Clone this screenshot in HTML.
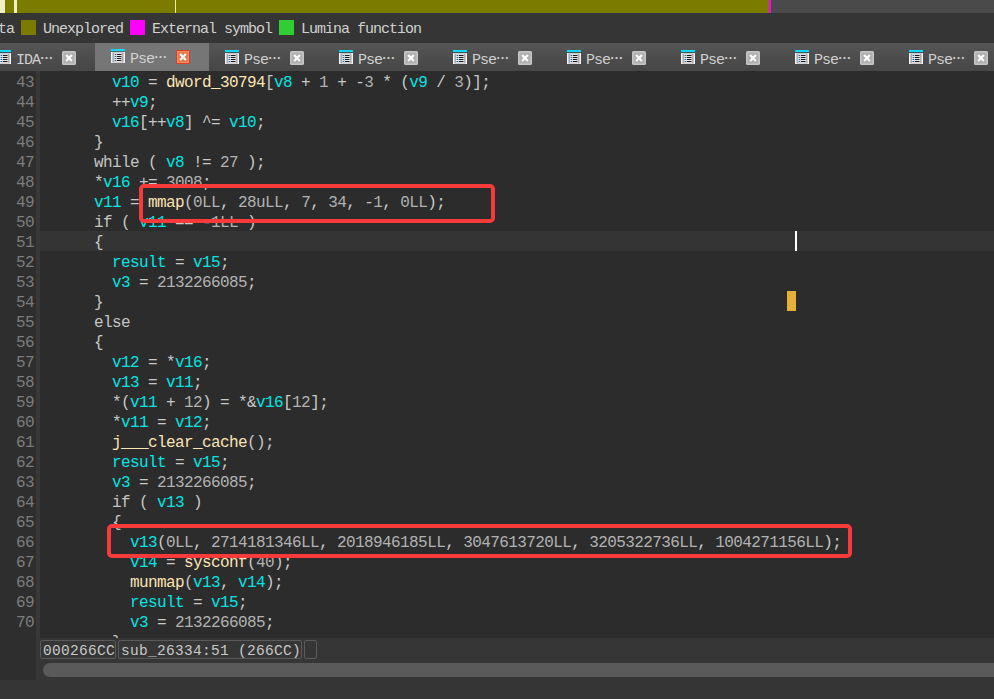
<!DOCTYPE html>
<html><head><meta charset="utf-8"><title>IDA</title>
<style>
html,body{margin:0;padding:0;background:#353535;}
body{width:994px;height:699px;position:relative;overflow:hidden;font-family:"Liberation Mono",monospace;}
#nav{position:absolute;left:0;top:0;width:994px;height:13px;background:#4a4a4a;}
#nav i{position:absolute;top:0;height:13px;display:block;}
#legend{position:absolute;left:0;top:13px;width:994px;height:30px;background:#353535;}
#legend .sw{position:absolute;top:7px;width:15px;height:15px;}
#legend .tx{position:absolute;top:7px;height:20px;line-height:20px;font-size:15px;letter-spacing:-1px;color:#d0d0d0;white-space:pre;}
#tabs{position:absolute;left:0;top:43px;width:994px;height:28px;background:linear-gradient(#555555,#464646);overflow:hidden;}
.tab{position:absolute;top:0;width:114px;height:28px;}
.tab.act{background:#767676;}
.tab .ic{position:absolute;left:16px;top:7px;}
.tab.act .ic{top:6px;}
.tab .tl{position:absolute;left:35px;top:6px;height:20px;line-height:20px;font-size:15px;letter-spacing:-1px;color:#d0d0d0;white-space:pre;}
.tab.act .tl{top:5px;}
.tab .el{font-family:"Noto Sans CJK SC",sans-serif;font-size:13px;font-weight:bold;letter-spacing:0;position:relative;left:0px;top:-1.5px;}
.tab .cl{position:absolute;left:81px;top:8px;}
.tab.act .cl{top:7px;}
#gutter{position:absolute;left:0;top:71px;width:36px;height:609px;background:#2e2e2e;}
#gband{position:absolute;left:36px;top:71px;width:4px;height:567px;background:#383838;}
#code{position:absolute;left:40px;top:71px;width:954px;height:567px;background:#2c2c2c;}
#codewrap{position:absolute;left:0;top:0;width:994px;height:638px;overflow:hidden;}
.ln{position:absolute;left:0;width:994px;height:20px;line-height:20px;font-size:16px;letter-spacing:-0.6px;white-space:pre;}
.ln.cur::before{content:"";position:absolute;left:40px;top:0;width:954px;height:20px;background:#343434;}
.ln.top{z-index:5;}
.no{position:absolute;left:0;top:2px;width:34px;text-align:right;color:#7c7c7c;}
.cd{position:absolute;top:2px;color:#c8c8c8;}
.v{color:#00e4e4;}
.g{color:#fde4b4;}
.n{color:#b2b2b2;}
.k{color:#c4c4c4;}
.p{color:#c8c8c8;}
.rb{position:absolute;box-sizing:border-box;border:4px solid #f83a3a;border-radius:5px;background:transparent;z-index:8;}
#cursor{position:absolute;left:795px;top:231px;width:2px;height:20px;background:#fff;z-index:6;}
#mark{position:absolute;left:787px;top:291px;width:9px;height:20px;background:#e6b038;z-index:6;}
#status{position:absolute;left:36px;top:638px;width:958px;height:42px;background:#363636;}
.sb{position:absolute;top:640px;height:19px;box-sizing:border-box;border:1px solid #5a5a5a;border-radius:2px;font-size:14.5px;letter-spacing:0.3px;line-height:21px;color:#c8c8c8;white-space:pre;padding-left:2px;}
#scroll{position:absolute;left:43px;top:663px;width:1000px;height:14px;border-radius:7px;background:#5a5a5a;}
</style></head><body>
<svg width="0" height="0" style="position:absolute">
<defs>
<g id="ico">
<rect x="0" y="0" width="14" height="2.2" fill="#12d6fe"/>
<rect x="0" y="2.2" width="14" height="0.8" fill="#000" fill-opacity="0.25"/>
<rect x="0" y="3" width="14" height="11" fill="#f4f4f4"/>
<rect x="1.4" y="3.4" width="11.2" height="10.1" fill="#acacac"/>
<rect x="3" y="4.2" width="8" height="8.6" fill="#e6e6e6"/>
<g fill="#1674b4"><rect x="3.6" y="5" width="1.7" height="1"/><rect x="3.6" y="7" width="1.7" height="1"/><rect x="3.6" y="9" width="1.7" height="1"/><rect x="3.6" y="11" width="1.7" height="1"/></g>
<g fill="#1c1c1c"><rect x="6" y="5" width="4.5" height="1"/><rect x="6" y="7" width="4.5" height="1"/><rect x="6" y="9" width="4.5" height="1"/><rect x="6" y="11" width="4.5" height="1"/></g>
</g>
<g id="clI">
<rect x="0" y="0" width="14" height="14" rx="1.5" fill="#c6c6c6"/>
<rect x="1.5" y="1.5" width="11" height="11" rx="0.5" fill="#b0b0b0"/>
<path d="M4.1 4.1 L9.9 9.9 M9.9 4.1 L4.1 9.9" stroke="#fff" stroke-width="2.1" stroke-linecap="butt"/>
</g>
<g id="clA">
<rect x="0" y="0" width="14" height="14" rx="1.5" fill="#e03a28"/>
<rect x="1" y="1" width="12" height="12" rx="0.5" fill="#f0a07c"/>
<rect x="1.6" y="1.6" width="10.8" height="10.8" rx="0.5" fill="#e87a4a"/>
<path d="M4.1 4.1 L9.9 9.9 M9.9 4.1 L4.1 9.9" stroke="#fff" stroke-width="2.1" stroke-linecap="butt"/>
</g>
</defs></svg>

<div id="nav">
<i style="left:0;width:769px;background:#7b7b00"></i>
<i style="left:0;width:5px;background:#f0f0c4"></i>
<i style="left:14px;width:3px;background:#f0f0c4"></i>
<i style="left:175px;width:1px;background:#e8e8b8"></i>
<i style="left:769px;width:2px;background:#ff00ff"></i>
</div>
<div id="legend">
<span class="tx" style="left:-18px">Data</span>
<span class="sw" style="left:21px;background:#7b7b00"></span><span class="tx" style="left:43px">Unexplored</span>
<span class="sw" style="left:130px;background:#ff00ff"></span><span class="tx" style="left:152px">External symbol</span>
<span class="sw" style="left:279px;background:#32cd32"></span><span class="tx" style="left:301px">Lumina function</span>
</div>
<div id="tabs">
<div class="tab" style="left:-19px"><svg class="ic" width="14" height="14" viewBox="0 0 14 14"><use href="#ico"/></svg><span class="tl">IDA<span class="el" lang="zh-CN">…</span></span><svg class="cl" width="14" height="14" viewBox="0 0 14 14"><use href="#clI"/></svg></div>
<div class="tab act" style="left:95px"><svg class="ic" width="14" height="14" viewBox="0 0 14 14"><use href="#ico"/></svg><span class="tl">Pse<span class="el" lang="zh-CN">…</span></span><svg class="cl" width="14" height="14" viewBox="0 0 14 14"><use href="#clA"/></svg></div>
<div class="tab" style="left:209px"><svg class="ic" width="14" height="14" viewBox="0 0 14 14"><use href="#ico"/></svg><span class="tl">Pse<span class="el" lang="zh-CN">…</span></span><svg class="cl" width="14" height="14" viewBox="0 0 14 14"><use href="#clI"/></svg></div>
<div class="tab" style="left:323px"><svg class="ic" width="14" height="14" viewBox="0 0 14 14"><use href="#ico"/></svg><span class="tl">Pse<span class="el" lang="zh-CN">…</span></span><svg class="cl" width="14" height="14" viewBox="0 0 14 14"><use href="#clI"/></svg></div>
<div class="tab" style="left:437px"><svg class="ic" width="14" height="14" viewBox="0 0 14 14"><use href="#ico"/></svg><span class="tl">Pse<span class="el" lang="zh-CN">…</span></span><svg class="cl" width="14" height="14" viewBox="0 0 14 14"><use href="#clI"/></svg></div>
<div class="tab" style="left:551px"><svg class="ic" width="14" height="14" viewBox="0 0 14 14"><use href="#ico"/></svg><span class="tl">Pse<span class="el" lang="zh-CN">…</span></span><svg class="cl" width="14" height="14" viewBox="0 0 14 14"><use href="#clI"/></svg></div>
<div class="tab" style="left:665px"><svg class="ic" width="14" height="14" viewBox="0 0 14 14"><use href="#ico"/></svg><span class="tl">Pse<span class="el" lang="zh-CN">…</span></span><svg class="cl" width="14" height="14" viewBox="0 0 14 14"><use href="#clI"/></svg></div>
<div class="tab" style="left:779px"><svg class="ic" width="14" height="14" viewBox="0 0 14 14"><use href="#ico"/></svg><span class="tl">Pse<span class="el" lang="zh-CN">…</span></span><svg class="cl" width="14" height="14" viewBox="0 0 14 14"><use href="#clI"/></svg></div>
<div class="tab" style="left:893px"><svg class="ic" width="14" height="14" viewBox="0 0 14 14"><use href="#ico"/></svg><span class="tl">Pse<span class="el" lang="zh-CN">…</span></span><svg class="cl" width="14" height="14" viewBox="0 0 14 14"><use href="#clI"/></svg></div>
</div>
<div id="gutter"></div><div id="gband"></div><div id="code"></div>
<div id="status"></div>
<div id="codewrap">
<div class="rb" style="left:139px;top:184px;width:355.5px;height:38.6px"></div>
<div class="rb" style="left:106.7px;top:524.3px;width:745.3px;height:33.5px"></div>
<div class="ln" style="top:71px"><span class="no">43</span><span class="cd" style="left:112px"><span class="v">v10</span><span class="p"> = </span><span class="g">dword_30794</span><span class="p">[</span><span class="v">v8</span><span class="p"> + </span><span class="n">1</span><span class="p"> + -</span><span class="n">3</span><span class="p"> * (</span><span class="v">v9</span><span class="p"> / </span><span class="n">3</span><span class="p">)];</span></span></div>
<div class="ln" style="top:91px"><span class="no">44</span><span class="cd" style="left:112px"><span class="p">++</span><span class="v">v9</span><span class="p">;</span></span></div>
<div class="ln" style="top:111px"><span class="no">45</span><span class="cd" style="left:112px"><span class="v">v16</span><span class="p">[++</span><span class="v">v8</span><span class="p">] ^= </span><span class="v">v10</span><span class="p">;</span></span></div>
<div class="ln" style="top:131px"><span class="no">46</span><span class="cd" style="left:94px"><span class="p">}</span></span></div>
<div class="ln" style="top:151px"><span class="no">47</span><span class="cd" style="left:94px"><span class="k">while</span><span class="p"> ( </span><span class="v">v8</span><span class="p"> != </span><span class="n">27</span><span class="p"> );</span></span></div>
<div class="ln" style="top:171px"><span class="no">48</span><span class="cd" style="left:94px"><span class="p">*</span><span class="v">v16</span><span class="p"> += </span><span class="n">3008</span><span class="p">;</span></span></div>
<div class="ln top" style="top:191px"><span class="no">49</span><span class="cd" style="left:94px"><span class="v">v11</span><span class="p"> = </span><span class="g">mmap</span><span class="p">(</span><span class="n">0LL</span><span class="p">, </span><span class="n">28uLL</span><span class="p">, </span><span class="n">7</span><span class="p">, </span><span class="n">34</span><span class="p">, -</span><span class="n">1</span><span class="p">, </span><span class="n">0LL</span><span class="p">);</span></span></div>
<div class="ln" style="top:211px"><span class="no">50</span><span class="cd" style="left:94px"><span class="k">if</span><span class="p"> ( </span><span class="v">v11</span><span class="p"> == -</span><span class="n">1LL</span><span class="p"> )</span></span></div>
<div class="ln cur" style="top:231px"><span class="no">51</span><span class="cd" style="left:94px"><span class="p">{</span></span></div>
<div class="ln" style="top:251px"><span class="no">52</span><span class="cd" style="left:112px"><span class="v">result</span><span class="p"> = </span><span class="v">v15</span><span class="p">;</span></span></div>
<div class="ln" style="top:271px"><span class="no">53</span><span class="cd" style="left:112px"><span class="v">v3</span><span class="p"> = </span><span class="n">2132266085</span><span class="p">;</span></span></div>
<div class="ln" style="top:291px"><span class="no">54</span><span class="cd" style="left:94px"><span class="p">}</span></span></div>
<div class="ln" style="top:311px"><span class="no">55</span><span class="cd" style="left:94px"><span class="k">else</span></span></div>
<div class="ln" style="top:331px"><span class="no">56</span><span class="cd" style="left:94px"><span class="p">{</span></span></div>
<div class="ln" style="top:351px"><span class="no">57</span><span class="cd" style="left:112px"><span class="v">v12</span><span class="p"> = *</span><span class="v">v16</span><span class="p">;</span></span></div>
<div class="ln" style="top:371px"><span class="no">58</span><span class="cd" style="left:112px"><span class="v">v13</span><span class="p"> = </span><span class="v">v11</span><span class="p">;</span></span></div>
<div class="ln" style="top:391px"><span class="no">59</span><span class="cd" style="left:112px"><span class="p">*(</span><span class="v">v11</span><span class="p"> + </span><span class="n">12</span><span class="p">) = *&amp;</span><span class="v">v16</span><span class="p">[</span><span class="n">12</span><span class="p">];</span></span></div>
<div class="ln" style="top:411px"><span class="no">60</span><span class="cd" style="left:112px"><span class="p">*</span><span class="v">v11</span><span class="p"> = </span><span class="v">v12</span><span class="p">;</span></span></div>
<div class="ln" style="top:431px"><span class="no">61</span><span class="cd" style="left:112px"><span class="g">j___clear_cache</span><span class="p">();</span></span></div>
<div class="ln" style="top:451px"><span class="no">62</span><span class="cd" style="left:112px"><span class="v">result</span><span class="p"> = </span><span class="v">v15</span><span class="p">;</span></span></div>
<div class="ln" style="top:471px"><span class="no">63</span><span class="cd" style="left:112px"><span class="v">v3</span><span class="p"> = </span><span class="n">2132266085</span><span class="p">;</span></span></div>
<div class="ln" style="top:491px"><span class="no">64</span><span class="cd" style="left:112px"><span class="k">if</span><span class="p"> ( </span><span class="v">v13</span><span class="p"> )</span></span></div>
<div class="ln" style="top:511px"><span class="no">65</span><span class="cd" style="left:112px"><span class="p">{</span></span></div>
<div class="ln top" style="top:531px"><span class="no">66</span><span class="cd" style="left:130px"><span class="v">v13</span><span class="p">(</span><span class="n">0LL</span><span class="p">, </span><span class="n">2714181346LL</span><span class="p">, </span><span class="n">2018946185LL</span><span class="p">, </span><span class="n">3047613720LL</span><span class="p">, </span><span class="n">3205322736LL</span><span class="p">, </span><span class="n">1004271156LL</span><span class="p">);</span></span></div>
<div class="ln" style="top:551px"><span class="no">67</span><span class="cd" style="left:130px"><span class="v">v14</span><span class="p"> = </span><span class="g">sysconf</span><span class="p">(</span><span class="n">40</span><span class="p">);</span></span></div>
<div class="ln" style="top:571px"><span class="no">68</span><span class="cd" style="left:130px"><span class="g">munmap</span><span class="p">(</span><span class="v">v13</span><span class="p">, </span><span class="v">v14</span><span class="p">);</span></span></div>
<div class="ln" style="top:591px"><span class="no">69</span><span class="cd" style="left:130px"><span class="v">result</span><span class="p"> = </span><span class="v">v15</span><span class="p">;</span></span></div>
<div class="ln" style="top:611px"><span class="no">70</span><span class="cd" style="left:130px"><span class="v">v3</span><span class="p"> = </span><span class="n">2132266085</span><span class="p">;</span></span></div>
<div class="ln" style="top:631px"><span class="no"></span><span class="cd" style="left:112px"><span class="p">}</span></span></div>
<div id="cursor"></div><div id="mark"></div>
</div>
<div class="sb" style="left:40px;width:76px">000266CC</div>
<div class="sb" style="left:118px;width:184px">sub_26334:51 (266CC)</div>
<div class="sb" style="left:304px;width:13px"></div>
<div id="scroll"></div>
</body></html>
